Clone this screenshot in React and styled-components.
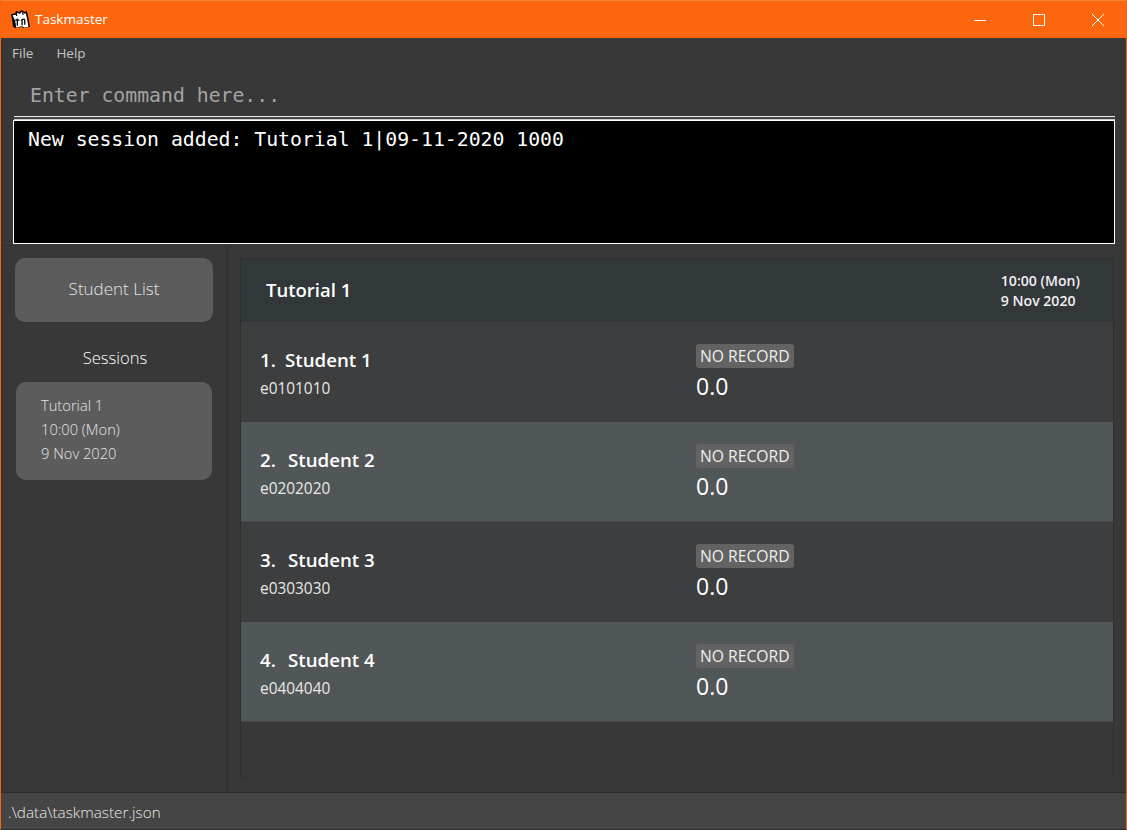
import React from 'react'
import styled, { createGlobalStyle } from 'styled-components'

const GlobalStyle = createGlobalStyle`
  html, body {
    margin: 0;
    padding: 0;
    background: #383838;
  }
  * {
    box-sizing: border-box;
  }
`

const uiFont = `'Open Sans', 'Noto Sans', sans-serif`
const monoFont = `'DejaVu Sans Mono', 'Liberation Mono', monospace`

const Window = styled.div`
  width: 1127px;
  height: 830px;
  display: flex;
  flex-direction: column;
  background: #383838;
  border-left: 1px solid #f9650f;
  border-right: 1px solid #f9650f;
  border-bottom: 1px solid #2b2b2b;
  font-family: ${uiFont};
  color: #fff;
  overflow: hidden;
`

const TitleBar = styled.header`
  height: 38px;
  flex-shrink: 0;
  margin: 0 -1px;
  display: flex;
  align-items: center;
  padding-left: 11px;
  background: #fb660f;
  border-top: 1px solid #f9823d;
`

const AppIcon = styled.svg`
  width: 19px;
  height: 19px;
  margin-right: 5px;
`

const AppName = styled.span`
  font-size: 13.5px;
  flex-grow: 1;
  padding-bottom: 2px;
`

const WinButton = styled.div`
  width: 59px;
  height: 37px;
  display: flex;
  align-items: center;
  justify-content: center;
`

const MenuBar = styled.nav`
  height: 32px;
  flex-shrink: 0;
  display: flex;
  align-items: center;
  gap: 23px;
  padding: 0 0 2px 11px;
  font-size: 13.5px;
  color: #c4c4c4;
`

const CommandBox = styled.div`
  height: 47px;
  flex-shrink: 0;
  margin: 0 11px 0 13px;
  padding: 5px 0 0 16px;
  display: flex;
  align-items: center;
  font-family: ${monoFont};
  font-size: 19.8px;
  color: #a3a3a3;
  border-bottom: 1px solid #eee;
  box-shadow: 0 2px 0 #444, 0 3px 0 #ccc;
`

const ResultBox = styled.div`
  height: 124px;
  flex-shrink: 0;
  margin: 3px 11px 0 12px;
  padding: 6px 14px;
  background: #000;
  border: 1px solid #fff;
  font-family: ${monoFont};
  font-size: 19.8px;
  line-height: 26px;
`

const Split = styled.div`
  flex-grow: 1;
  display: flex;
  min-height: 0;
  margin-top: 1px;
  border-top: 1px solid #333;
`

const Sidebar = styled.aside`
  width: 227px;
  flex-shrink: 0;
  padding: 12px 13px 0 14px;
  display: flex;
  flex-direction: column;
  align-items: center;
  border-right: 2px solid #2f2f2f;
`

const ListButton = styled.div`
  width: 198px;
  height: 64px;
  flex-shrink: 0;
  padding-bottom: 4px;
  display: flex;
  align-items: center;
  justify-content: center;
  background: #5c5c5c;
  border-radius: 10px;
  font-size: 17px;
  font-weight: 300;
  color: #e4e4e4;
`

const SectionLabel = styled.div`
  margin: 24px 0 12px;
  padding-left: 2px;
  font-size: 16.6px;
  line-height: 24px;
  font-weight: 300;
`

const SessionCard = styled.div`
  width: 196px;
  height: 98px;
  padding: 11px 25px;
  background: #5c5c5c;
  border-radius: 10px;
  font-size: 14.7px;
  line-height: 24px;
  font-weight: 300;
  color: #e4e4e4;
`

const Main = styled.main`
  flex-grow: 1;
  min-width: 0;
  padding: 12px 12px 13px 12px;
  display: flex;
`

const Panel = styled.section`
  flex-grow: 1;
  display: flex;
  flex-direction: column;
  border: 1px solid #2f2f2f;
  border-bottom-color: #343434;
`

const SessionHeader = styled.div`
  height: 63px;
  flex-shrink: 0;
  display: flex;
  align-items: center;
  justify-content: space-between;
  padding: 0 33px 0 25px;
  background: #32373a;
`

const SessionTitle = styled.div`
  font-size: 18.5px;
  font-weight: 600;
  margin-bottom: 2px;
`

const SessionTime = styled.div`
  padding-top: 1px;
  font-size: 14.1px;
  line-height: 20px;
  font-weight: 600;
  color: #f0f0f0;
`

const Row = styled.div`
  height: 100px;
  flex-shrink: 0;
  display: grid;
  grid-template-columns: 436px 1fr;
  padding: 21px 0 0 19px;
  background: ${p => (p.$alt ? '#515658' : '#3c3e3f')};
  border-bottom: 1px solid ${p => (p.$alt ? '#46494b' : '#3c3e3f')};
`

const StudentName = styled.div`
  display: flex;
  font-size: 18.7px;
  line-height: 34px;
  font-weight: 600;
`

const StudentIndex = styled.span`
  width: ${p => (p.$narrow ? '25px' : '28px')};
`

const StudentId = styled.div`
  margin-top: 1px;
  font-size: 15.4px;
  line-height: 22px;
  color: #e8e8e8;
`

const StatusCol = styled.div`
  padding-top: 1px;
  display: flex;
  flex-direction: column;
  align-items: flex-start;
`

const Badge = styled.span`
  height: 24px;
  padding: 0 4px;
  display: flex;
  align-items: center;
  background: #636363;
  border-radius: 3px;
  font-size: 15.7px;
  color: #eee;
`

const Score = styled.div`
  margin-top: 2px;
  font-size: 23px;
  line-height: 32px;
  font-weight: 400;
`

const StatusBar = styled.footer`
  height: 37px;
  flex-shrink: 0;
  display: flex;
  align-items: center;
  padding: 2px 0 0 7px;
  background: #454545;
  border-top: 1px solid #2c2c2c;
  font-size: 15.3px;
  font-weight: 300;
  color: #e8e8e8;
`

const students = [
  { index: '1.', name: 'Student 1', id: 'e0101010' },
  { index: '2.', name: 'Student 2', id: 'e0202020' },
  { index: '3.', name: 'Student 3', id: 'e0303030' },
  { index: '4.', name: 'Student 4', id: 'e0404040' }
]

const App = () => (
  <Window>
    <GlobalStyle />
    <TitleBar>
      <AppIcon viewBox='0 0 18 18'>
        <path d='M0 4l4-1 1-2 3 1 2-2 3 2 2-1 1 4 2 11-6 1-2-1-6 1-2-1-1-7z' fill='#000' />
        <path d='M1.500 5l3-.5 1-2 3 1 2-2 2.500 2 1-.5 1 4 1.500 9-4 .5-2-1-5.500 1-1-6z' fill='#fff' />
        <path d='M6 8v7M4 9.500h4M10.500 8.500v6M13 9v5M10 10.500a2 2 0 0 1 3-1.500M5 3l.5 2.500M11 2l.5 2.500' stroke='#000' strokeWidth='1.2' fill='none' />
      </AppIcon>
      <AppName>Taskmaster</AppName>
      <WinButton>
        <svg width='12' height='12' viewBox='0 0 12 12'><path d='M0 6.500h12' stroke='#fff' /></svg>
      </WinButton>
      <WinButton>
        <svg width='12' height='12' viewBox='0 0 12 12'><rect x='.5' y='.5' width='11' height='11' fill='none' stroke='#fff' /></svg>
      </WinButton>
      <WinButton>
        <svg width='12' height='12' viewBox='0 0 12 12'><path d='M0 0l12 12M12 0L0 12' stroke='#fff' /></svg>
      </WinButton>
    </TitleBar>
    <MenuBar>
      <span>File</span>
      <span>Help</span>
    </MenuBar>
    <CommandBox>Enter command here...</CommandBox>
    <ResultBox>New session added: Tutorial 1|09-11-2020 1000</ResultBox>
    <Split>
      <Sidebar>
        <ListButton>Student List</ListButton>
        <SectionLabel>Sessions</SectionLabel>
        <SessionCard>
          <div>Tutorial 1</div>
          <div>10:00 (Mon)</div>
          <div>9 Nov 2020</div>
        </SessionCard>
      </Sidebar>
      <Main>
        <Panel>
          <SessionHeader>
            <SessionTitle>Tutorial 1</SessionTitle>
            <SessionTime>
              <div>10:00 (Mon)</div>
              <div>9 Nov 2020</div>
            </SessionTime>
          </SessionHeader>
          {students.map((s, i) => (
            <Row key={s.id} $alt={i % 2 === 1}>
              <div>
                <StudentName>
                  <StudentIndex $narrow={i === 0}>{s.index}</StudentIndex>
                  <span>{s.name}</span>
                </StudentName>
                <StudentId>{s.id}</StudentId>
              </div>
              <StatusCol>
                <Badge>NO RECORD</Badge>
                <Score>0.0</Score>
              </StatusCol>
            </Row>
          ))}
        </Panel>
      </Main>
    </Split>
    <StatusBar>.\data\taskmaster.json</StatusBar>
  </Window>
)

export default App
